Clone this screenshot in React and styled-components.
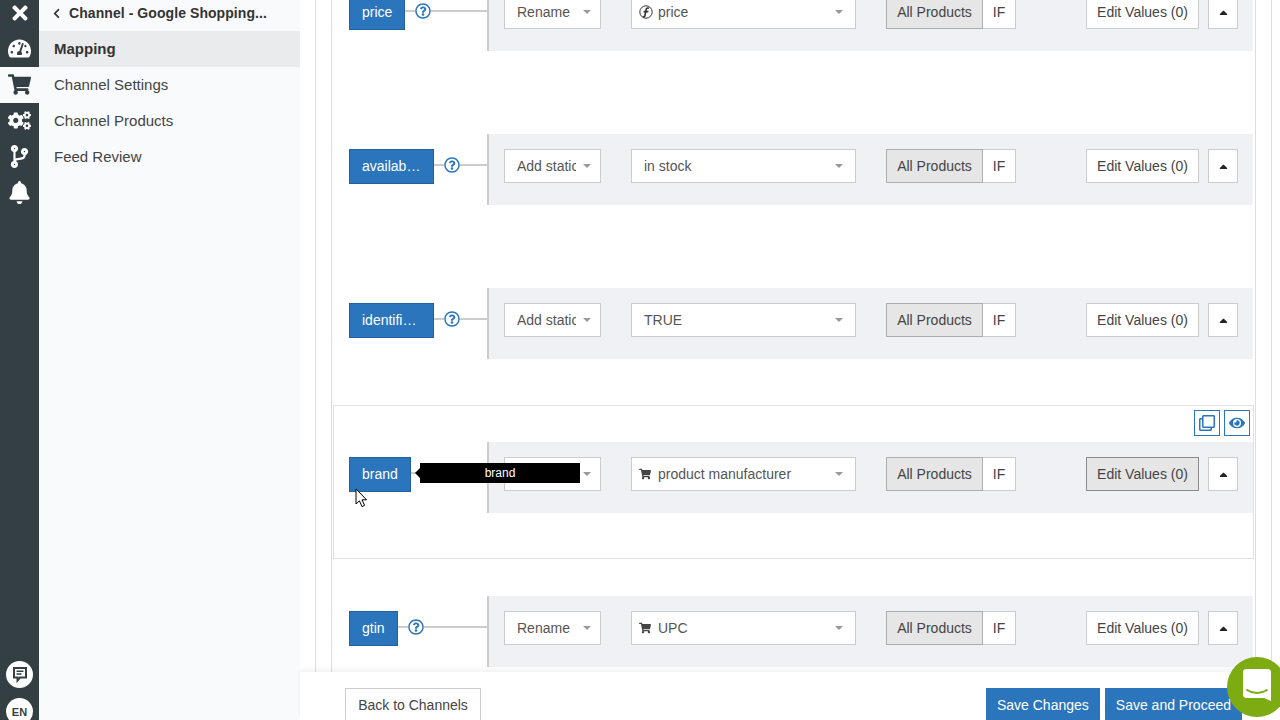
import React from 'react'
import styled, { createGlobalStyle } from 'styled-components'
import { FaTimes, FaTachometerAlt, FaShoppingCart, FaCogs, FaCodeBranch, FaBell, FaChevronLeft, FaCaretUp, FaRegQuestionCircle, FaEye, FaRegClone } from 'react-icons/fa'

const GlobalStyle = createGlobalStyle`
    html, body {
        margin: 0;
        height: 100%;
        overflow: hidden;
        background: #fff;
        font-family: "Liberation Sans", Arial, sans-serif;
    }
    * { box-sizing: border-box; }
`

const mappings = [
    { name: 'price', width: 56, action: 'Rename', value: 'price', icon: 'fn' },
    { name: 'availability', width: 85, action: 'Add static', value: 'in stock' },
    { name: 'identifier_exists', width: 85, action: 'Add static', value: 'TRUE' },
    { name: 'brand', width: 62, action: 'Rename', value: 'product manufacturer', icon: 'cart', hovered: true },
    { name: 'gtin', width: 49, action: 'Rename', value: 'UPC', icon: 'cart' },
]

function FunctionIcon() {
    return (
        <svg width="14" height="14" viewBox="0 0 14 14" fill="none" stroke="#333">
            <circle cx="7" cy="7" r="6.2" strokeWidth="1" />
            <path d="M10 3.2C8.2 2.6 7.3 3.4 7 5L6 10.4C5.8 11.4 5.2 11.9 4 11.6M4.6 6.6H9.4" strokeWidth="1.6" />
        </svg>
    )
}

function ChatIcon() {
    return (
        <svg width="16" height="17" viewBox="0 0 16 17" fill="none" stroke="#343f44" strokeWidth="2">
            <path d="M2 2H14V11.5H8L5.5 14.5V11.5H2Z" />
            <path d="M4.5 5.2H11.5M4.5 8H9.5" strokeWidth="1.5" />
        </svg>
    )
}

function CursorIcon() {
    return (
        <svg width="13" height="20" viewBox="0 0 13 20">
            <path d="M1 1V16L4.4 12.8L7 18.6L9.6 17.4L7 11.8H11.6Z" fill="#fff" stroke="#000" strokeWidth="1" />
        </svg>
    )
}

function MappingRow({ item }) {
    return (
        <Row $hovered={item.hovered}>
            {item.hovered && (
                <RowTools>
                    <ToolButton><FaRegClone /></ToolButton>
                    <ToolButton><FaEye /></ToolButton>
                </RowTools>
            )}
            <LabelCol>
                <FieldLabel $width={item.width}>{item.name}</FieldLabel>
                <Stub />
                {!item.hovered && <HelpIcon><FaRegQuestionCircle /></HelpIcon>}
                <Connector />
                {item.hovered && (
                    <>
                        <Tooltip>{item.name}</Tooltip>
                        <Cursor><CursorIcon /></Cursor>
                    </>
                )}
            </LabelCol>
            <Bar>
                <Select $width={97}>
                    <ActionText>{item.action}</ActionText>
                    <Caret />
                </Select>
                <Select $width={225} $wide>
                    {item.icon === 'fn' && <ValueIcon><FunctionIcon /></ValueIcon>}
                    {item.icon === 'cart' && <ValueIcon><FaShoppingCart /></ValueIcon>}
                    <ValueText $plain={!item.icon}>{item.value}</ValueText>
                    <Caret />
                </Select>
                <Group>
                    <GroupButton $active>All Products</GroupButton>
                    <GroupButton>IF</GroupButton>
                </Group>
                <EditButton $active={item.hovered}>Edit Values (0)</EditButton>
                <ArrowButton><FaCaretUp /></ArrowButton>
            </Bar>
        </Row>
    )
}

export default function App() {
    return (
        <>
            <GlobalStyle />
            <Page>
                <Rail>
                    <RailTop>
                        <RailClose><FaTimes /></RailClose>
                        <RailItem><FaTachometerAlt /></RailItem>
                        <RailItem $active><FaShoppingCart /></RailItem>
                        <RailItem><FaCogs /></RailItem>
                        <RailItem><FaCodeBranch /></RailItem>
                        <RailItem><FaBell /></RailItem>
                    </RailTop>
                    <RailBottom>
                        <RailCircle><ChatIcon /></RailCircle>
                        <RailCircle>EN</RailCircle>
                    </RailBottom>
                </Rail>
                <SidePanel>
                    <SideHeader>
                        <FaChevronLeft />
                        <SideTitle>Channel - Google Shopping...</SideTitle>
                    </SideHeader>
                    <SideItem $active>Mapping</SideItem>
                    <SideItem>Channel Settings</SideItem>
                    <SideItem>Channel Products</SideItem>
                    <SideItem>Feed Review</SideItem>
                </SidePanel>
                <Main>
                    <Scroller>
                        <OuterFrame>
                            <InnerFrame>
                                {mappings.map(item => <MappingRow key={item.name} item={item} />)}
                            </InnerFrame>
                        </OuterFrame>
                    </Scroller>
                    <Footer>
                        <BackButton>Back to Channels</BackButton>
                        <SaveGroup>
                            <SaveButton>Save Changes</SaveButton>
                            <SaveButton>Save and Proceed</SaveButton>
                        </SaveGroup>
                    </Footer>
                    <ChatBubble>
                        <svg width="28" height="36" viewBox="0 0 28 36">
                            <path d="M3 0H25C26.6 0 28 1.4 28 3V32L21 29H3C1.4 29 0 27.6 0 26V3C0 1.4 1.4 0 3 0Z" fill="#fff" />
                            <path d="M4 21C10 25 18 25 24 21" fill="none" stroke="#7cac12" strokeWidth="2" strokeLinecap="round" />
                        </svg>
                    </ChatBubble>
                </Main>
            </Page>
        </>
    )
}

const Page = styled.div`
    display: flex;
    width: 1280px;
    height: 720px;
    overflow: hidden;
`

const Rail = styled.nav`
    width: 39px;
    flex-shrink: 0;
    background: #343f44;
    display: flex;
    flex-direction: column;
    justify-content: space-between;
    overflow: hidden;
`

const RailTop = styled.div`
    display: flex;
    flex-direction: column;
`

const RailClose = styled.div`
    height: 31px;
    display: flex;
    align-items: center;
    justify-content: center;
    padding-bottom: 5px;
    color: #fff;
    font-size: 22px;
`

const RailItem = styled.div`
    height: 36px;
    display: flex;
    align-items: center;
    justify-content: center;
    padding-bottom: 2px;
    font-size: 23px;
    color: ${p => (p.$active ? '#343f44' : '#fff')};
    background: ${p => (p.$active ? '#f9fafc' : 'transparent')};
`

const RailBottom = styled.div`
    display: flex;
    flex-direction: column;
    align-items: center;
    gap: 10px;
    margin-bottom: -5px;
`

const RailCircle = styled.div`
    width: 27px;
    height: 27px;
    border-radius: 50%;
    background: #fff;
    color: #343f44;
    font-size: 11px;
    font-weight: bold;
    display: flex;
    align-items: center;
    justify-content: center;
`

const SidePanel = styled.aside`
    width: 261px;
    flex-shrink: 0;
    background: #f9fafc;
`

const SideHeader = styled.div`
    height: 31px;
    display: flex;
    align-items: center;
    gap: 7px;
    padding: 0 0 5px 12px;
    color: #333;

    svg {
        font-size: 11px;
    }
`

const SideTitle = styled.span`
    font-size: 14px;
    font-weight: bold;
    letter-spacing: 0.07px;
    white-space: nowrap;
`

const SideItem = styled.div`
    height: 36px;
    line-height: 36px;
    padding-left: 15px;
    font-size: 15px;
    color: ${p => (p.$active ? '#333' : '#444')};
    font-weight: ${p => (p.$active ? 'bold' : 'normal')};
    background: ${p => (p.$active ? '#e9ebec' : 'transparent')};
`

const Main = styled.main`
    position: relative;
    flex: 1;
    min-width: 0;
    display: flex;
    flex-direction: column;
    background: #fff;
`

const Scroller = styled.div`
    flex: 1;
    min-height: 0;
    overflow: hidden;
    padding: 0 8px 0 15px;
`

const OuterFrame = styled.div`
    margin-top: -57px;
    padding: 0 15px;
    border-left: 1px solid #ddd;
    border-right: 1px solid #ddd;
`

const InnerFrame = styled.div`
    padding: 0 1px;
    border-left: 1px solid #ddd;
    border-right: 1px solid #ddd;
`

const Row = styled.div`
    position: relative;
    display: flex;
    align-items: flex-start;
    height: 154px;
    padding-top: 36px;
    border: 1px solid ${p => (p.$hovered ? '#e2e2e2' : 'transparent')};
`

const RowTools = styled.div`
    position: absolute;
    top: 4px;
    right: 3px;
    display: flex;
    gap: 4px;
`

const ToolButton = styled.button`
    width: 26px;
    height: 26px;
    padding: 0;
    display: flex;
    align-items: center;
    justify-content: center;
    background: #fff;
    border: 1px solid #2a75bb;
    color: #2a75bb;
    font-size: 16px;
`

const LabelCol = styled.div`
    position: relative;
    width: 153px;
    height: 71px;
    flex-shrink: 0;
    padding: 15px 0 0 15px;
    display: flex;
    align-items: flex-start;
`

const FieldLabel = styled.div`
    width: ${p => p.$width}px;
    height: 35px;
    flex-shrink: 0;
    padding: 0 11px 0 12px;
    overflow: hidden;
    background: #2a75bb;
    border: 1px solid #22619c;
    color: #fff;
    font-size: 14px;
    line-height: 33px;
    white-space: nowrap;
    text-overflow: ellipsis;
`

const Stub = styled.span`
    width: 10px;
    height: 2px;
    margin-top: 15px;
    background: #ccc;
    flex-shrink: 0;
`

const HelpIcon = styled.span`
    display: flex;
    width: 16px;
    height: 16px;
    margin-top: 8px;
    flex-shrink: 0;
    color: #2a75bb;
    font-size: 16px;
`

const Connector = styled.span`
    flex: 1;
    height: 2px;
    margin-top: 15px;
    background: #ccc;
`

const Tooltip = styled.div`
    position: absolute;
    left: 86px;
    top: 21px;
    width: 160px;
    height: 20px;
    line-height: 20px;
    z-index: 2;
    background: #000;
    color: #fff;
    font-size: 12px;
    text-align: center;

    &::before {
        content: '';
        position: absolute;
        left: -5px;
        top: 5px;
        border-style: solid;
        border-width: 5px 5px 5px 0;
        border-color: transparent #000 transparent transparent;
    }
`

const Cursor = styled.span`
    position: absolute;
    left: 21px;
    top: 46px;
    z-index: 3;
    line-height: 0;
`

const Bar = styled.div`
    flex: 1;
    height: 71px;
    display: flex;
    align-items: flex-start;
    padding: 15px 15px 0 15px;
    background: #f0f1f4;
    border-left: 2px solid #ccc;
`

const Select = styled.div`
    width: ${p => p.$width}px;
    height: 34px;
    flex-shrink: 0;
    margin-right: 30px;
    display: flex;
    align-items: center;
    padding: 0 ${p => (p.$wide ? '12px' : '9px')} 0 ${p => (p.$wide ? '7px' : '12px')};
    background: #fff;
    border: 1px solid #ccc;
    color: #555;
    font-size: 14px;
`

const ActionText = styled.span`
    width: 59px;
    overflow: hidden;
    white-space: nowrap;
`

const ValueIcon = styled.span`
    display: flex;
    flex-shrink: 0;
    width: 14px;
    margin-right: 5px;
    color: #444;
    font-size: 12px;
`

const ValueText = styled.span`
    padding-left: ${p => (p.$plain ? '5px' : '0')};
`

const Caret = styled.span`
    margin-left: auto;
    border-style: solid;
    border-width: 4px 4px 0;
    border-color: #999 transparent transparent;
`

const Group = styled.div`
    display: flex;
    height: 34px;
`

const GroupButton = styled.div`
    width: ${p => (p.$active ? '97px' : '33px')};
    display: flex;
    align-items: center;
    justify-content: center;
    white-space: nowrap;
    background: ${p => (p.$active ? '#e6e6e6' : '#fff')};
    border: 1px solid ${p => (p.$active ? '#adadad' : '#ccc')};
    border-left-width: ${p => (p.$active ? '1px' : '0')};
    color: #444;
    font-size: 14px;
`

const EditButton = styled.div`
    margin-left: 70px;
    width: 113px;
    height: 34px;
    display: flex;
    align-items: center;
    justify-content: center;
    background: ${p => (p.$active ? '#e6e6e6' : '#fff')};
    border: 1px solid ${p => (p.$active ? '#8c8c8c' : '#ccc')};
    color: #444;
    font-size: 14px;
`

const ArrowButton = styled.div`
    margin-left: 9px;
    width: 30px;
    height: 34px;
    display: flex;
    align-items: center;
    justify-content: center;
    background: #fff;
    border: 1px solid #ccc;
    color: #222;
    font-size: 13px;
`

const Footer = styled.footer`
    position: relative;
    z-index: 4;
    height: 48px;
    flex-shrink: 0;
    display: flex;
    justify-content: space-between;
    padding: 16px 38px 0 45px;
    background: #fff;
    box-shadow: 0 -3px 4px rgba(0, 0, 0, 0.05);
`

const BackButton = styled.button`
    width: 136px;
    height: 34px;
    padding: 0;
    background: #fff;
    border: 1px solid #ccc;
    color: #444;
    font: 14px "Liberation Sans", Arial, sans-serif;
`

const SaveGroup = styled.div`
    display: flex;
    gap: 5px;
`

const SaveButton = styled.button`
    height: 34px;
    padding: 0 11px;
    background: #2a75bb;
    border: 0;
    color: #fff;
    font: 14px "Liberation Sans", Arial, sans-serif;
`

const ChatBubble = styled.div`
    position: absolute;
    left: 927px;
    top: 657px;
    z-index: 5;
    width: 60px;
    height: 60px;
    display: flex;
    align-items: center;
    justify-content: center;
    border-radius: 50%;
    background: #7cac12;
`
